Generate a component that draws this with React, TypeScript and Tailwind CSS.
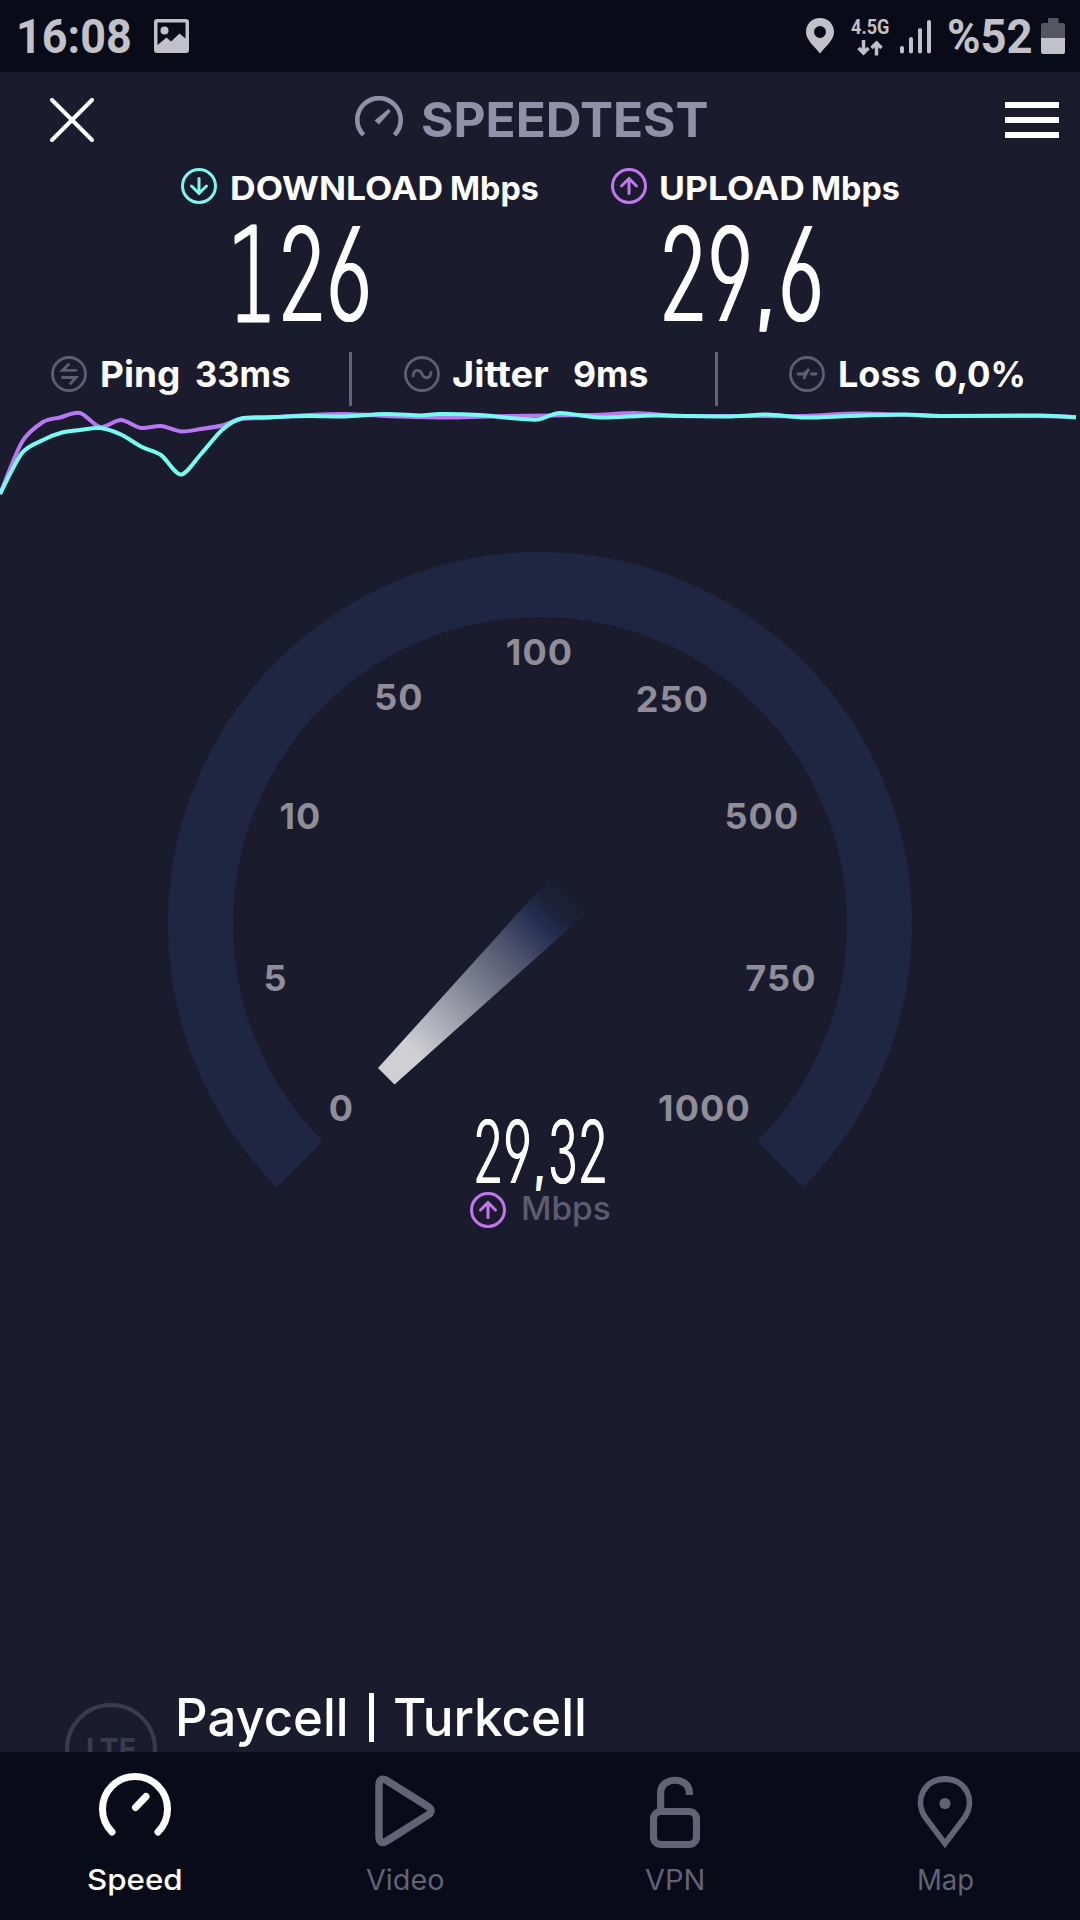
import React, { FC, ReactNode, useLayoutEffect, useRef, useState } from 'react';

interface FitTextProps {
  width: number;
  className?: string;
  children: ReactNode;
}

// Stretches or condenses its text to an exact advance width
const FitText: FC<FitTextProps> = ({ width, className = '', children }) => {
  const ref = useRef<HTMLSpanElement>(null);
  const [scale, setScale] = useState(1);

  useLayoutEffect(() => {
    if (ref.current) setScale(width / ref.current.offsetWidth);
  }, [width]);

  return (
    <span className="block shrink-0 leading-none" style={{ width }}>
      <span
        ref={ref}
        className={`inline-block origin-left whitespace-pre leading-none align-top ${className}`}
        style={{ transform: `scaleX(${scale})` }}
      >
        {children}
      </span>
    </span>
  );
};

const ArrowCircle: FC<{ up?: boolean; color: string }> = ({ up = false, color }) => (
  <svg width="36" height="36" viewBox="0 0 36 36" fill="none" stroke={color} strokeWidth="3" className="shrink-0">
    <circle cx="18" cy="18" r="16.5" />
    <g strokeLinecap="round" transform={up ? 'rotate(180 18 18)' : undefined}>
      <path d="M18 10.5V25M10.5 18L18 25.3L25.5 18" />
    </g>
  </svg>
);

const StatIcon: FC<{ children: ReactNode }> = ({ children }) => (
  <svg width="36" height="36" viewBox="0 0 36 36" fill="none" stroke="#5d5e72" strokeWidth="2.8" className="shrink-0">
    <circle cx="18" cy="18" r="16.5" />
    <g strokeLinecap="round">{children}</g>
  </svg>
);

const StatusBar: FC = () => (
  <div className="flex h-[72px] shrink-0 items-center bg-[#090b19] font-['Roboto'] font-bold text-[#c2c1c7]">
    <div className="ml-[16px] pt-[2px]">
      <FitText width={116} className="text-[48px]">16:08</FitText>
    </div>
    <svg width="36" height="36" viewBox="0 0 36 36" className="ml-[22px]">
      <path
        fillRule="evenodd"
        fill="#c2c1c7"
        d="M3 1H32Q35 1 35 4V32Q35 35 32 35H3Q0 35 0 32V4Q0 1 3 1ZM3.500 4.500V27L12.500 19.500L17 23.500L25.500 15.500L31.500 20.500V4.500Z"
      />
      <circle cx="10.500" cy="12.500" r="4" fill="#c2c1c7" />
    </svg>
    <svg width="30" height="36" viewBox="0 0 30 36" className="ml-[615px]">
      <path
        fillRule="evenodd"
        fill="#c2c1c7"
        d="M15 0C7 0 1 6 1 14C1 22 9 28 15 35.500C21 28 29 22 29 14C29 6 23 0 15 0ZM15 8A6 6 0 1 1 15 20A6 6 0 1 1 15 8Z"
      />
    </svg>
    <div className="ml-[16px] flex w-[38px] flex-col items-center gap-[3px]">
      <FitText width={38} className="text-[20px]">4.5G</FitText>
      <svg width="26" height="16" viewBox="0 0 26 16" fill="none" stroke="#c2c1c7" strokeWidth="3.500">
        <path d="M6.500 0V13M1.500 8L6.500 13L11.500 8M19.500 15.500V3M14.500 8L19.500 3L24.500 8" />
      </svg>
    </div>
    <svg width="32" height="36" viewBox="0 0 32 36" stroke="#c2c1c7" strokeWidth="4" strokeLinecap="round" className="ml-[10px]">
      <path d="M3 30V33.500M12 21V33.500M21 12V33.500M30 4V33.500" />
    </svg>
    <div className="ml-[16px] pt-[2px]">
      <FitText width={86} className="text-[48px]">%52</FitText>
    </div>
    <svg width="24" height="36" viewBox="0 0 24 36" className="ml-[8px]">
      <path d="M7 0H17.500V5H22Q24 5 24 7V20.500H0V7Q0 5 2 5H7Z" fill="#55565f" />
      <path d="M0 20H24V34Q24 36 22 36H2Q0 36 0 34Z" fill="#c2c1c7" />
    </svg>
  </div>
);

const Header: FC = () => (
  <div className="flex h-[96px] shrink-0 items-center">
    <svg width="44" height="44" viewBox="0 0 44 44" stroke="#fff" strokeWidth="4" strokeLinecap="round" className="ml-[50px]">
      <path d="M2 2L42 42M42 2L2 42" />
    </svg>
    <svg width="48" height="48" viewBox="0 0 48 48" fill="none" className="ml-[261px]">
      <path d="M8.500 39A21.700 21.700 0 1 1 39.500 39" stroke="#9091a9" strokeWidth="4.600" />
      <path d="M19.500 24.500L33.500 13L35.500 15.500L24 28.500Z" fill="#9091a9" />
    </svg>
    <div className="ml-[18px]">
      <FitText width={288} className="text-[48px] font-bold text-[#9091a9]">SPEEDTEST</FitText>
    </div>
    <div className="ml-[296px] flex w-[54px] flex-col gap-[9px]">
      <div className="h-[6px] bg-white" />
      <div className="h-[6px] bg-white" />
      <div className="h-[6px] bg-white" />
    </div>
  </div>
);

const Comma: FC = () => <span className="px-[0.12em] align-[0.05em] text-[0.55em] leading-none font-extrabold">,</span>;

const Readings: FC = () => (
  <div className="flex h-[184px] shrink-0">
    <div className="ml-[181px] w-[430px]">
      <div className="flex h-[36px] items-center">
        <ArrowCircle color="#7df7ee" />
        <div className="ml-[13px] flex pt-[4px] text-[33px] font-bold">
          <FitText width={213}>DOWNLOAD</FitText>
          <div className="ml-[7px]">
            <FitText width={89}>Mbps</FitText>
          </div>
        </div>
      </div>
      <div className="ml-[46px] mt-[5px]">
        <FitText
          width={145}
          className="text-[130px] font-light [font-feature-settings:'cv03','cv04'] [text-shadow:1.5px_0_0_#fff,-1.5px_0_0_#fff]"
        >
          <span className="font-['DejaVu_Sans'] font-extralight [-webkit-text-stroke:3px_#fff]">1</span>26
        </FitText>
      </div>
    </div>
    <div>
      <div className="flex h-[36px] items-center">
        <ArrowCircle up color="#c376f0" />
        <div className="ml-[12px] flex pt-[4px] text-[33px] font-bold">
          <FitText width={146}>UPLOAD</FitText>
          <div className="ml-[6px]">
            <FitText width={89}>Mbps</FitText>
          </div>
        </div>
      </div>
      <div className="ml-[48px] mt-[5px]">
        <FitText
          width={165}
          className="text-[130px] font-light [font-feature-settings:'cv03','cv04'] [text-shadow:1.5px_0_0_#fff,-1.5px_0_0_#fff]"
        >
          29<Comma />6
        </FitText>
      </div>
    </div>
  </div>
);

const Stats: FC = () => (
  <div className="flex h-[54px] shrink-0 text-[36px] font-bold">
    <div className="flex h-[44px] w-[349px] items-center pl-[51px]">
      <StatIcon>
        <path d="M25 14.300H11.500L17.500 8.500M11.500 21.500H25L19.500 27.500" />
      </StatIcon>
      <div className="ml-[13px]"><FitText width={80}>Ping</FitText></div>
      <div className="ml-[15px]"><FitText width={96}>33ms</FitText></div>
    </div>
    <div className="w-[3px] bg-[#636478]" />
    <div className="flex h-[44px] w-[363px] items-center pl-[52px]">
      <StatIcon>
        <path d="M9 20C10 12.500 16 13 18 18C20 23 26 23.500 27 16.500" />
      </StatIcon>
      <div className="ml-[12px]"><FitText width={97}>Jitter</FitText></div>
      <div className="ml-[24px]"><FitText width={75}>9ms</FitText></div>
    </div>
    <div className="w-[3px] bg-[#636478]" />
    <div className="flex h-[44px] items-center pl-[71px]">
      <StatIcon>
        <path d="M9 18H14.500L19.500 14M15 22L19 14M22.500 18H27" />
      </StatIcon>
      <div className="ml-[13px]"><FitText width={83}>Loss</FitText></div>
      <div className="ml-[13px]"><FitText width={92}>0,0%</FitText></div>
    </div>
  </div>
);

type Point = [number, number];

const uploadPoints: Point[] = [
  [0, 88], [22, 36], [43, 16], [60, 11.5], [80, 7], [100, 21], [121, 14], [141, 22], [161, 20], [181, 25.5],
  [201, 23], [222, 19.5], [241, 13], [265, 12], [300, 9.5], [345, 8], [400, 10.500], [450, 11.500], [510, 10],
  [590, 9], [635, 7], [680, 10], [740, 10], [800, 10], [860, 7.5], [940, 10], [1030, 10], [1076, 11],
];

const downloadPoints: Point[] = [
  [0, 88], [22, 47], [43, 34], [62, 26.5], [80, 24], [100, 22], [121, 28.5], [142, 41], [161, 49], [181, 68.5],
  [201, 48], [222, 24], [241, 12.5], [275, 11], [310, 10], [345, 10.5], [385, 8], [420, 9.5], [440, 8],
  [480, 9], [510, 12], [538, 13.5], [560, 7], [600, 11.5], [655, 9.5], [730, 10.5], [767, 8.5], [805, 11.5],
  [850, 10], [905, 8.5], [940, 10], [1040, 9.5], [1076, 11.5],
];

// Catmull-Rom spline through the samples
const smoothPath = (pts: Point[]) =>
  pts.slice(1).reduce((d, p, i) => {
    const p0 = pts[Math.max(i - 1, 0)];
    const p1 = pts[i];
    const p3 = pts[Math.min(i + 2, pts.length - 1)];
    const k = 7;
    return `${d}C${p1[0] + (p[0] - p0[0]) / k} ${p1[1] + (p[1] - p0[1]) / k} ${p[0] - (p3[0] - p1[0]) / k} ${
      p[1] - (p3[1] - p1[1]) / k
    } ${p[0]} ${p[1]}`;
  }, `M${pts[0][0]} ${pts[0][1]}`);

const SpeedChart: FC = () => (
  <svg width="1080" height="100" viewBox="0 0 1080 100" fill="none" strokeWidth="4" className="block shrink-0">
    <path d={smoothPath(uploadPoints)} stroke="#b877f3" />
    <path d={smoothPath(downloadPoints)} stroke="#75fbf1" />
  </svg>
);

const gaugeLabels = [
  { text: '0', x: 341.5, y: 1121 },
  { text: '5', x: 275.5, y: 991 },
  { text: '10', x: 300.5, y: 829 },
  { text: '50', x: 399, y: 710 },
  { text: '100', x: 539.5, y: 665 },
  { text: '250', x: 672.5, y: 712 },
  { text: '500', x: 762, y: 829 },
  { text: '750', x: 781, y: 991 },
  { text: '1000', x: 704.5, y: 1121 },
];

const Gauge: FC = () => (
  <div className="relative h-[690px] shrink-0">
    <svg width="1080" height="690" viewBox="0 546 1080 690" className="block">
      <defs>
        <linearGradient id="needle" gradientUnits="userSpaceOnUse" x1="386" y1="1076" x2="570" y2="894">
          <stop offset="0.14" stopColor="#d0cfd4" />
          <stop offset="0.4" stopColor="#9294a1" />
          <stop offset="0.65" stopColor="#575a73" />
          <stop offset="0.84" stopColor="#232e50" />
          <stop offset="0.92" stopColor="#1b2137" />
          <stop offset="1" stopColor="#1b1e31" />
        </linearGradient>
      </defs>
      <path d="M299.900 1164.100A339.500 339.500 0 1 1 780.100 1164.100" fill="none" stroke="#1e2641" strokeWidth="65" />
      <path d="M378 1068L551.700 876L588 911.500L394.500 1084.500Z" fill="url(#needle)" />
      <g fill="#8e8d98" className="font-['Inter'] text-[36px] font-bold tracking-[1.2px]" textAnchor="middle">
        {gaugeLabels.map((label) => (
          <text key={label.text} x={label.x} y={label.y}>
            {label.text}
          </text>
        ))}
      </g>
    </svg>
    <div className="absolute left-[470px] top-[563px]">
      <div className="ml-[3px]">
        <FitText
          width={135}
          className="text-[86px] font-light [font-feature-settings:'cv03','cv04'] [text-shadow:0.8px_0_0_#fff,-0.8px_0_0_#fff]"
        >
          29<Comma />32
        </FitText>
      </div>
      <div className="-mt-[3px] flex items-center">
        <ArrowCircle up color="#c376f0" />
        <div className="-mt-[3px] ml-[15px]">
          <FitText width={90} className="text-[33px] font-medium text-[#5c5d70]">Mbps</FitText>
        </div>
      </div>
    </div>
  </div>
);

const Provider: FC = () => (
  <div className="mt-auto flex h-[64px] shrink-0 overflow-hidden">
    <div className="ml-[65px] mt-[15px] flex h-[92px] w-[92px] shrink-0 items-center justify-center rounded-full border-4 border-[#3b3b4e]">
      <FitText width={50} className="text-[31px] font-bold text-[#3b3b4e]">LTE</FitText>
    </div>
    <div className="ml-[18px] mt-[4px] flex text-[52px] font-medium">
      <FitText width={174}>Paycell</FitText>
      <div className="ml-[20px] mt-[1px] h-[49px] w-[5px] bg-white" />
      <div className="ml-[19px]">
        <FitText width={194}>Turkcell</FitText>
      </div>
    </div>
  </div>
);

const navItems = [
  {
    label: 'Speed',
    width: 96,
    active: true,
    icon: (
      <path
        d="M23 63A32.500 32.500 0 1 1 69 63M46.500 38.500L57 27.500"
        strokeWidth="7"
        strokeLinecap="round"
        transform="translate(-6 -3)"
      />
    ),
  },
  {
    label: 'Video',
    width: 78,
    icon: <path d="M14 14V64Q14 74 22.500 68.500L63 43Q69 38.500 63 34.500L22.500 9Q14 4 14 14Z" strokeWidth="7.500" />,
  },
  {
    label: 'VPN',
    width: 60,
    icon: (
      <g strokeWidth="7.200">
        <rect x="18.500" y="39.500" width="43" height="33" rx="7.500" />
        <path d="M25.600 38V21C25.600 4 54.400 4 54.400 21V23" />
      </g>
    ),
  },
  {
    label: 'Map',
    width: 57,
    icon: (
      <g strokeWidth="6">
        <path d="M40 71.500L19 45C7.500 28 18 7 40 7S72.500 28 61 45Z" transform="translate(2 0) scale(0.95 1)" />
        <circle cx="40" cy="31.500" r="5.500" fill="currentColor" stroke="none" />
      </g>
    ),
  },
];

const BottomNav: FC = () => (
  <div className="grid h-[168px] shrink-0 grid-cols-4 bg-[#090b19]">
    {navItems.map((item) => (
      <div key={item.label} className={`flex flex-col items-center pt-[20px] ${item.active ? 'text-white' : 'text-[#626375]'}`}>
        <svg width="80" height="80" viewBox="0 0 80 80" fill="none" stroke="currentColor">
          {item.icon}
        </svg>
        <div className={item.active ? 'mt-[13px] text-[29px] font-medium' : 'mt-[14px] text-[28px]'}>
          <FitText width={item.width}>{item.label}</FitText>
        </div>
      </div>
    ))}
  </div>
);

const App: FC = () => (
  <div className="flex h-[1920px] w-[1080px] flex-col overflow-hidden bg-[#1b1b2e] font-['Inter',sans-serif] text-white">
    <StatusBar />
    <Header />
    <Readings />
    <Stats />
    <SpeedChart />
    <div className="h-[40px] shrink-0" />
    <Gauge />
    <Provider />
    <BottomNav />
  </div>
);

export default App;
